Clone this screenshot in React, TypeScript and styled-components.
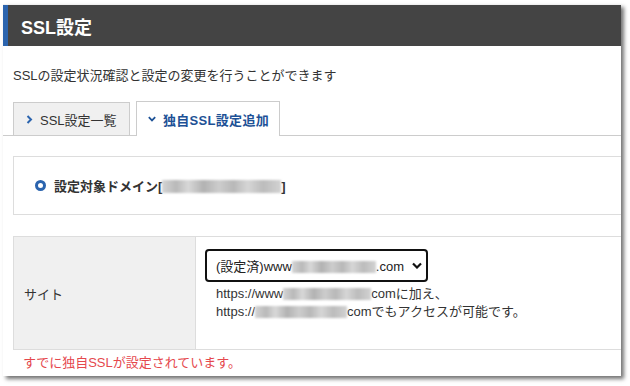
import * as React from 'react';
import styled, { createGlobalStyle } from 'styled-components';

const GlobalStyle = createGlobalStyle`
  body {
    margin: 0;
    background: #fff;
    font-family: "Liberation Sans", "Noto Sans CJK JP", sans-serif;
    color: #333;
  }
`;

// 画面全体（影付きのキャプチャ枠）
const Page = styled.div`
  width: 630px;
  height: 386px;
  padding: 4px 0 0 3px;
  box-sizing: border-box;
`;

const Frame = styled.div`
  width: 618px;
  height: 372px;
  background: #fff;
  overflow: hidden;
  border-top: 1px solid #f0f0f0;
  box-sizing: border-box;
  box-shadow: 3px 3px 4px rgba(0, 0, 0, 0.55);
`;

// ヘッダー
const Header = styled.h1`
  margin: 0;
  height: 41px;
  display: flex;
  align-items: center;
  padding-left: 13px;
  background: #444;
  border-left: 5px solid #2b64ae;
  color: #fff;
  font-size: 18px;
  font-weight: bold;
`;

const Description = styled.p`
  margin: 21px 0 0 10px;
  font-size: 13px;
  line-height: 18px;
  color: #333;
`;

// タブ
const TabBar = styled.div`
  display: flex;
  gap: 6px;
  margin-top: 16px;
  padding-left: 10px;
  border-bottom: 1px solid #ccc;
  align-items: flex-end;
`;

const Tab = styled.div<{ $active?: boolean }>`
  display: flex;
  align-items: center;
  gap: 7px;
  box-sizing: border-box;
  height: ${(p) => (p.$active ? '35px' : '33px')};
  width: ${(p) => (p.$active ? '144px' : '117px')};
  padding-left: ${(p) => (p.$active ? '11px' : '12px')};
  border: 1px solid #ccc;
  border-bottom: none;
  margin-bottom: ${(p) => (p.$active ? '-1px' : '0')};
  background: ${(p) => (p.$active ? '#fff' : '#f0f0f0')};
  color: ${(p) => (p.$active ? '#1d5196' : '#333')};
  font-size: 13px;
  font-weight: ${(p) => (p.$active ? 'bold' : 'normal')};
  letter-spacing: ${(p) => (p.$active ? '0.3px' : '0')};
`;

const Content = styled.div`
  padding: 20px 0 0 10px;
`;

// 設定対象ドメイン
const DomainPanel = styled.div`
  height: 59px;
  box-sizing: border-box;
  margin-right: -20px;
  border: 1px solid #ddd;
  display: flex;
  align-items: center;
  padding-left: 21px;
  gap: 8px;
  font-size: 13px;
  font-weight: bold;
  color: #333;
`;

const Radio = styled.span`
  width: 11px;
  height: 11px;
  box-sizing: border-box;
  border: 3px solid #2b64ae;
  border-radius: 50%;
  flex: none;
`;

const Blur = styled.span<{ $w: number; $h?: number }>`
  display: inline-block;
  width: ${(p) => p.$w}px;
  height: ${(p) => p.$h ?? 12}px;
  vertical-align: -2px;
  background: linear-gradient(
    90deg,
    #d4d4d4 0%,
    #b9b9b9 12%,
    #d8d8d8 22%,
    #b2b2b2 35%,
    #cdcdcd 48%,
    #b8b8b8 60%,
    #d6d6d6 72%,
    #bcbcbc 85%,
    #d2d2d2 100%
  );
  filter: blur(0.8px);
`;

// サイト テーブル
const Table = styled.div`
  margin-top: 21px;
  margin-right: -20px;
  height: 114px;
  box-sizing: border-box;
  border: 1px solid #ddd;
  display: grid;
  grid-template-columns: 182px 1fr;
`;

const LabelCell = styled.div`
  background: #f0f0f0;
  border-right: 1px solid #ddd;
  display: flex;
  align-items: center;
  padding-left: 10px;
  font-size: 13px;
  color: #333;
`;

const ValueCell = styled.div`
  padding: 12px 0 0 9px;
  font-size: 13px;
  color: #333;
`;

const SelectBox = styled.div`
  width: 223px;
  height: 33px;
  box-sizing: border-box;
  border: 2px solid #111;
  border-radius: 4px;
  display: flex;
  align-items: center;
  padding: 0 4px 0 9px;
  font-size: 13px;
  color: #222;
  white-space: nowrap;
`;

const SelectText = styled.span`
  flex: 1;
`;

const Note = styled.div`
  margin-top: 3px;
  padding-left: 11px;
  line-height: 18px;
  font-size: 13px;
  white-space: nowrap;
`;

const ErrorText = styled.p`
  margin: 4px 0 0 10px;
  line-height: 18px;
  font-size: 13px;
  color: #e5484d;
`;

const ChevronRight = () => (
  <svg width="7" height="9" viewBox="0 0 7 9">
    <polyline points="1.5,1 5,4.5 1.5,8" fill="none" stroke="#2b64ae" strokeWidth="2" />
  </svg>
);

const ChevronDown = ({ color, size }: { color: string; size: number }) => (
  <svg width={size} height={size * 0.7} viewBox="0 0 10 7">
    <polyline points="1,1.5 5,5.5 9,1.5" fill="none" stroke={color} strokeWidth="2.2" />
  </svg>
);

export default function App() {
  return (
    <>
      <GlobalStyle />
      <Page>
        <Frame>
          <Header>SSL設定</Header>
          <Description>SSLの設定状況確認と設定の変更を行うことができます</Description>
          <TabBar>
            <Tab>
              <ChevronRight />
              SSL設定一覧
            </Tab>
            <Tab $active>
              <ChevronDown color="#1d5196" size={8} />
              独自SSL設定追加
            </Tab>
          </TabBar>
          <Content>
            <DomainPanel>
              <Radio />
              <span>
                設定対象ドメイン[<Blur $w={119} $h={13} />]
              </span>
            </DomainPanel>
            <Table>
              <LabelCell>サイト</LabelCell>
              <ValueCell>
                <SelectBox>
                  <SelectText>
                    (設定済)www<Blur $w={84} />.com
                  </SelectText>
                  <ChevronDown color="#111" size={10} />
                </SelectBox>
                <Note>
                  https://www<Blur $w={88} />comに加え、
                  <br />
                  https://<Blur $w={92} />comでもアクセスが可能です。
                </Note>
              </ValueCell>
            </Table>
            <ErrorText>すでに独自SSLが設定されています。</ErrorText>
          </Content>
        </Frame>
      </Page>
    </>
  );
}
